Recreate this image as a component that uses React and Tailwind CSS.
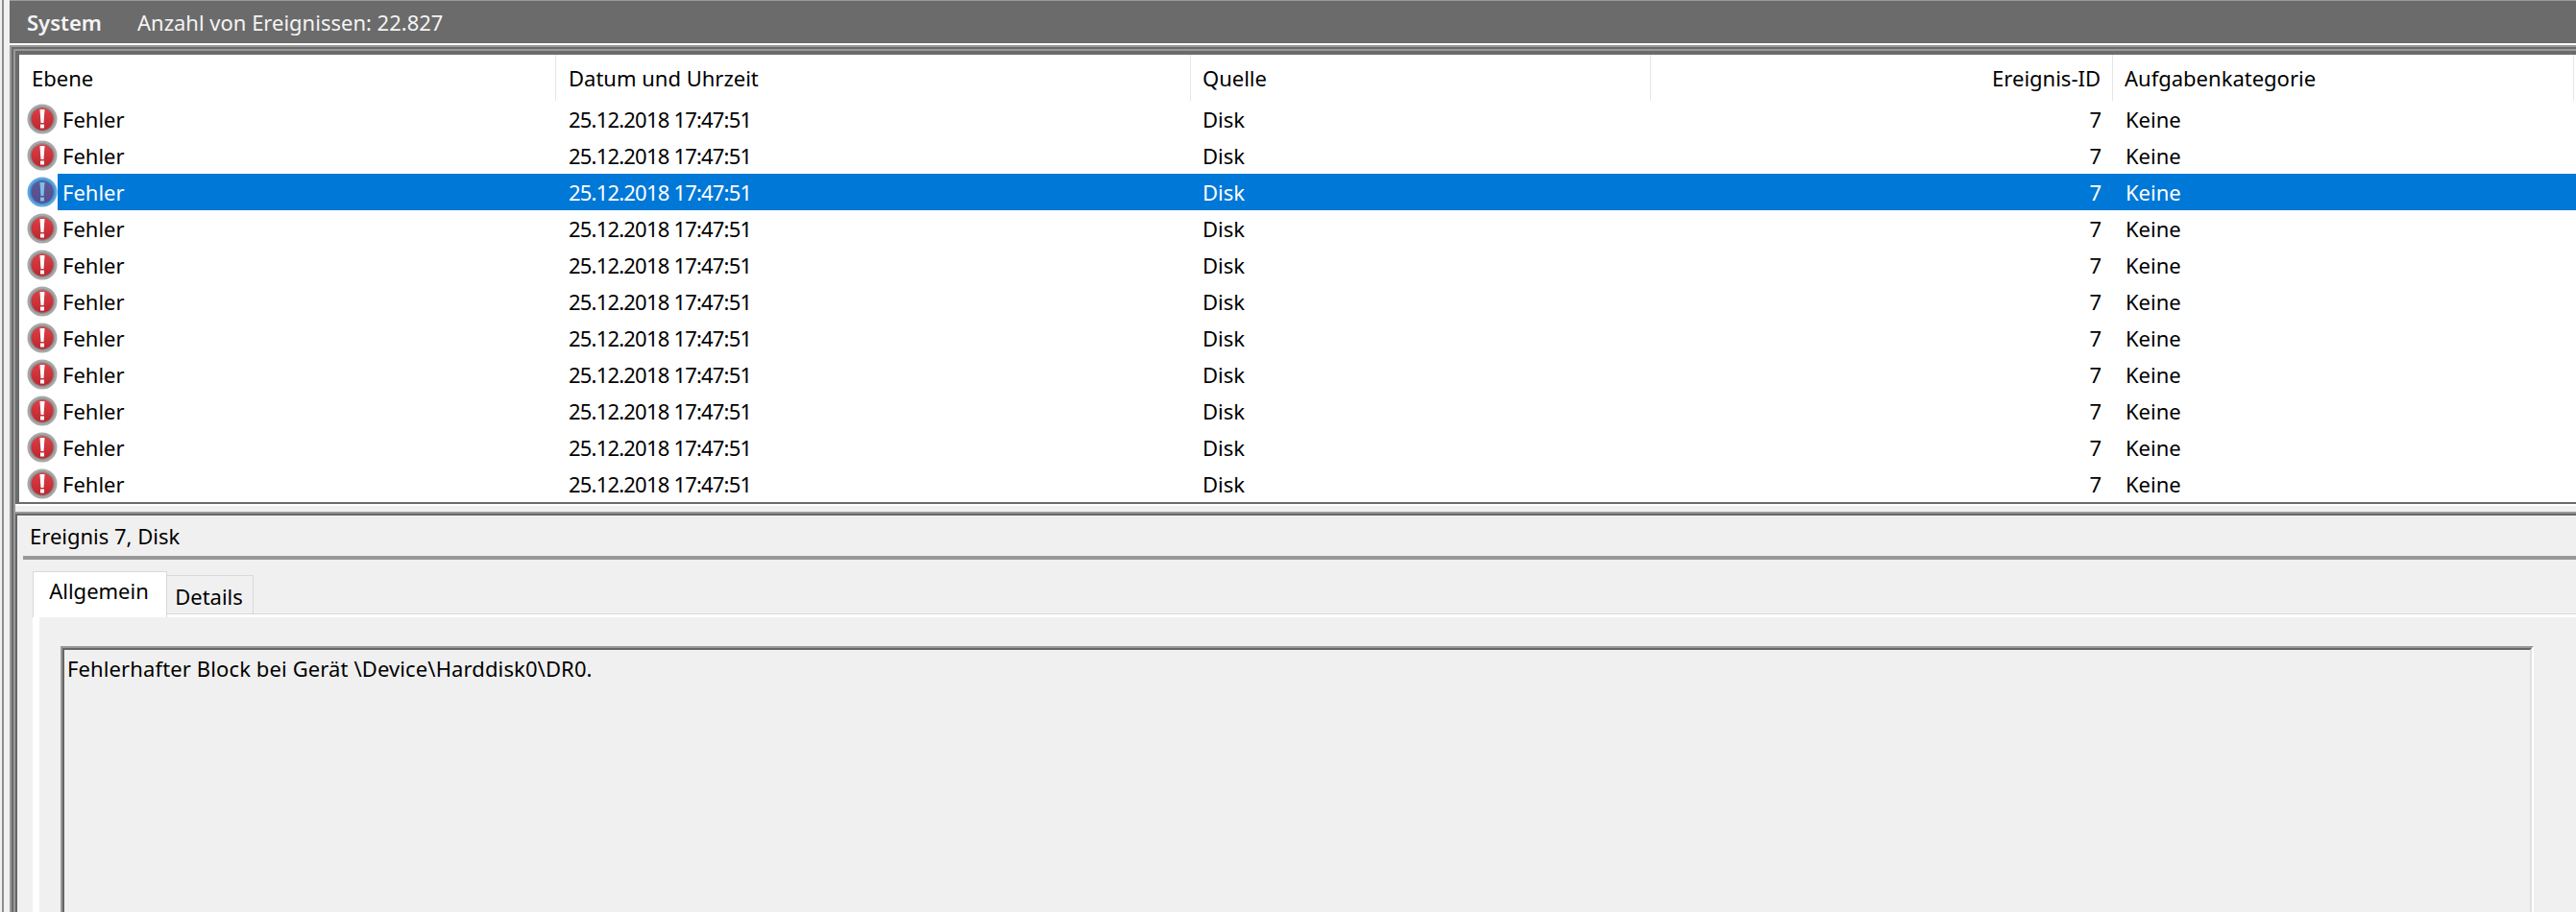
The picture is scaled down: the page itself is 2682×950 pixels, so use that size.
// App.jsx - Ereignisanzeige: Ereignisliste + Detailbereich
import React from 'react';

const ROW_COUNT = 11;
const SELECTED_ROW = 2;
const GRID = 'grid grid-cols-[519px_661px_479px_481px_1fr]';

function ErrorIcon({ selected }) {
  const id = selected ? 'iconFillSelected' : 'iconFill';
  return (
    <svg width="32" height="32" viewBox="0 0 32 32" className="shrink-0">
      <defs>
        <linearGradient id={id} x1="0" y1="0" x2="0" y2="1">
          <stop offset="0" stopColor={selected ? '#5c5a98' : '#dc3f46'} />
          <stop offset="1" stopColor={selected ? '#594c8c' : '#bd2730'} />
        </linearGradient>
      </defs>
      <circle cx="16" cy="16" r="15.5" fill={selected ? '#5ea7dc' : '#a8a8a8'} />
      <circle cx="16" cy="16" r="13" fill={selected ? '#3f86c8' : '#8c8c8c'} />
      <circle cx="16" cy="16" r="11.5" fill={`url(#${id})`} />
      <path d="M13.5 6h5l-1 14h-3z" fill={selected ? '#7cc0ec' : '#ffffff'} />
      <rect x="14" y="21.5" width="4" height="4" fill={selected ? '#7cc0ec' : '#ffffff'} />
    </svg>
  );
}

function EventRow({ selected }) {
  const tone = selected ? 'bg-[#0078d7] text-white' : 'text-black';
  return (
    <div className="flex h-[38px] items-center">
      <div className="flex w-[40px] shrink-0 justify-end">
        <ErrorIcon selected={selected} />
      </div>
      <div className={`${GRID} h-full flex-1 items-center pb-[1px] ${tone}`}>
        <span className="pl-[5px]">Fehler</span>
        <span className="pl-[13px] tracking-[-0.8px]">25.12.2018 17:47:51</span>
        <span className="pl-[12px]">Disk</span>
        <span className="pr-[12px] text-right">7</span>
        <span className="pl-[13px]">Keine</span>
      </div>
    </div>
  );
}

function ListHeader() {
  const divider = 'flex h-full items-center border-r border-[#e5e5e5]';
  return (
    <div className="grid h-[48px] grid-cols-[559px_661px_479px_481px_480px] text-black">
      <div className={`${divider} pl-[13px]`}>Ebene</div>
      <div className={`${divider} pl-[13px]`}>Datum und Uhrzeit</div>
      <div className={`${divider} pl-[12px]`}>Quelle</div>
      <div className={`${divider} justify-end pr-[12px]`}>Ereignis-ID</div>
      <div className={`${divider} pl-[12px]`}>Aufgabenkategorie</div>
    </div>
  );
}

function DetailPane() {
  return (
    <div className="border-t-2 border-l-2 border-[#666666]">
      <div className="ml-[6px]">
        <div className="flex h-[42px] items-center pl-[7px] text-black">Ereignis 7, Disk</div>
        <div className="h-[4px] bg-[#999999]" />
      </div>

      {/* Tabs */}
      <div className="ml-[16px] mt-[12px] flex h-[44px] items-end text-black">
        <div className="z-10 -mb-[4px] flex h-[48px] w-[140px] items-start justify-center border-x border-t border-[#d9d9d9] bg-white pr-[2px] pt-[5px]">
          Allgemein
        </div>
        <div className="flex h-[40px] w-[90px] items-center justify-center border-r border-t border-[#d9d9d9] pr-[2px] pt-[3px]">
          Details
        </div>
        <div className="h-full flex-1" />
      </div>

      <div className="ml-[16px] border-t border-[#d9d9d9] bg-white pl-[7px] pt-[3px]">
        <div className="bg-[#f0f0f0] pb-[40px] pl-[22px] pr-[44px] pt-[30px]">
          <div className="h-[400px] border-l-2 border-r-2 border-t-2 border-[#999999] border-r-white">
            <div className="h-full border-l-2 border-r-2 border-t-2 border-[#666666] border-r-[#e0e0e0] pl-[3px] pt-[5px] tracking-[0.12px] text-black">
              Fehlerhafter Block bei Gerät \Device\Harddisk0\DR0.
            </div>
          </div>
        </div>
      </div>
    </div>
  );
}

export default function App() {
  return (
    <div className="h-[950px] w-full overflow-hidden bg-[#f0f0f0] pl-[2px] font-['Noto_Sans',sans-serif] text-[22px] leading-[28px]">
      <div className="h-full border-l-2 border-[#8a8d91] pl-[6px]">
        {/* Log title bar */}
        <div className="flex h-[45px] items-center border-t border-[#999999] bg-[#6b6b6b] pl-[18px] text-[#f4f4f4]">
          <span className="w-[115px] font-semibold">System</span>
          <span>Anzahl von Ereignissen: 22.827</span>
        </div>
        <div className="h-[2px] bg-white" />

        {/* Nested window frames */}
        <div className="h-[1000px] border-l-2 border-t-2 border-[#999999]">
          <div className="h-full border-l-2 border-t-2 border-[#6b6b6b]">
            <div className="h-full border-l-2 border-t-2 border-[#999999]">
              <div className="border-b-2 border-l-4 border-t-4 border-[#6b6b6b] bg-white">
                <ListHeader />
                {Array.from({ length: ROW_COUNT }, (_, i) => (
                  <EventRow key={i} selected={i === SELECTED_ROW} />
                ))}
              </div>
              <div className="h-[2px] bg-white" />
              <div className="h-[6px]" />
              <div className="border-t-2 border-[#999999]">
                <DetailPane />
              </div>
            </div>
          </div>
        </div>
      </div>
    </div>
  );
}
